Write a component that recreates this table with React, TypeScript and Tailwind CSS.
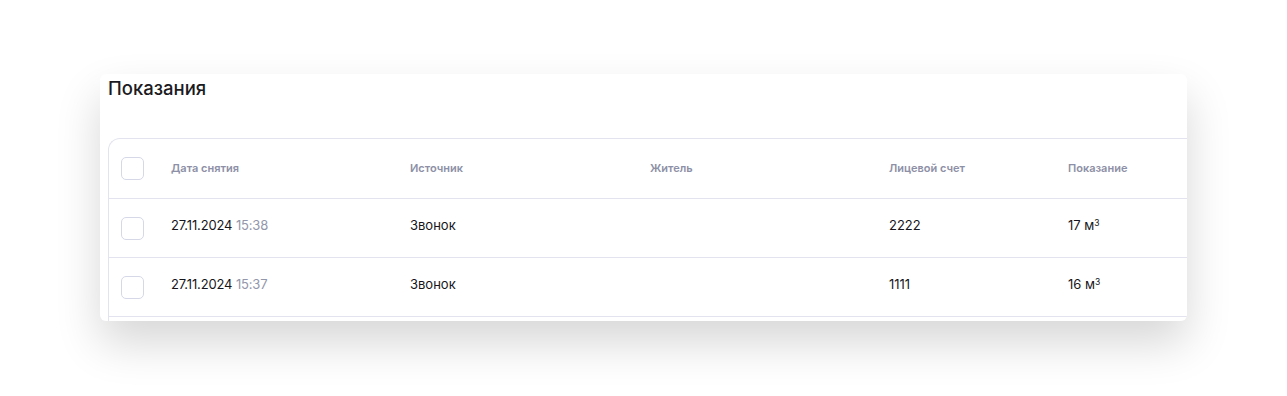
import React from "react";

type Row = { date: string; time: string; source: string; resident: string; account: string; value: string };

const rows: Row[] = [
  { date: "27.11.2024", time: "15:38", source: "Звонок", resident: "", account: "2222", value: "17" },
  { date: "27.11.2024", time: "15:37", source: "Звонок", resident: "", account: "1111", value: "16" },
];

function Checkbox() {
  return <div className="w-[23px] h-[23px] rounded-[5px] border border-[#d6d8e8] bg-white" />;
}

export default function App() {
  return (
    <div className="min-h-[396px] bg-white pt-[74px] pl-[100px]" style={{ fontFamily: "Inter, 'Noto Sans', sans-serif" }}>
      <div className="w-[1087px] h-[247px] rounded-[6px] bg-white overflow-hidden shadow-[0_22px_45px_rgba(0,0,0,0.16)] pl-[8px]">
        <h2 className="text-[18.5px] leading-[28px] font-medium text-[#1b1b1f]">Показания</h2>
        <div className="mt-[36px] w-[1300px] h-[200px] border-l border-t border-[#e2e3ee] rounded-tl-[12px]">
          <div className="flex items-center h-[60px] border-b border-[#e2e3ee] text-[11px] font-semibold text-[#8d90a6]">
            <div className="w-[62px] pl-[12px] shrink-0"><Checkbox /></div>
            <div className="w-[239px] shrink-0">Дата снятия</div>
            <div className="w-[240px] shrink-0">Источник</div>
            <div className="w-[239px] shrink-0">Житель</div>
            <div className="w-[179px] shrink-0">Лицевой счет</div>
            <div className="w-[200px] shrink-0">Показание</div>
          </div>
          {rows.map((r, i) => (
            <div key={i} className="flex items-center h-[59px] border-b border-[#e2e3ee] text-[13px] text-[#16161a]">
              <div className="w-[62px] pl-[12px] shrink-0"><Checkbox /></div>
              <div className="w-[239px] shrink-0 mb-[5px] tracking-[-0.15px]">
                {r.date} <span className="text-[#9297ab]">{r.time}</span>
              </div>
              <div className="w-[240px] shrink-0 mb-[5px]">{r.source}</div>
              <div className="w-[239px] shrink-0 mb-[5px]">{r.resident}</div>
              <div className="w-[179px] shrink-0 mb-[5px]">{r.account}</div>
              <div className="w-[200px] shrink-0 mb-[5px]">
                {r.value} м<sup className="text-[8.5px] -top-[4px]">3</sup>
              </div>
            </div>
          ))}
        </div>
      </div>
    </div>
  );
}
